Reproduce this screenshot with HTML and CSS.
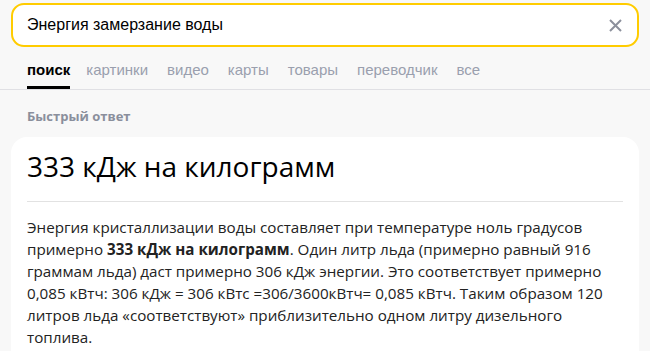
FILE: index.html
```html
<!DOCTYPE html>
<html lang="ru">
<head>
    <meta charset="UTF-8">
    <meta name="viewport" content="width=device-width, initial-scale=1.0">
    <title>Энергия замерзание воды</title>
    <link rel="stylesheet" href="styles.css">
</head>
<body>
    <!-- поисковая строка -->
    <div class="search-box">
        <span class="search-text">Энергия замерзание воды</span>
        <svg class="clear-icon" width="13" height="13" viewBox="0 0 13 13">
            <path d="M1 1 L12 12 M12 1 L1 12" stroke="#8c909c" stroke-width="2" fill="none"/>
        </svg>
    </div>

    <!-- вкладки -->
    <nav class="tabs">
        <a class="tab active">поиск</a>
        <a class="tab">картинки</a>
        <a class="tab">видео</a>
        <a class="tab">карты</a>
        <a class="tab">товары</a>
        <a class="tab">переводчик</a>
        <a class="tab">все</a>
    </nav>

    <main class="content">
        <div class="section-title">Быстрый ответ</div>
        <div class="answer-card">
            <h1 class="answer-title">333 кДж на килограмм</h1>
            <p class="answer-text">
                Энергия кристаллизации воды составляет при температуре ноль градусов
                примерно <b>333 кДж на килограмм</b>. Один литр льда (примерно равный 916
                граммам льда) даст примерно 306 кДж энергии. Это соответствует примерно
                0,085 кВтч: 306 кДж = 306 кВтс =306/3600кВтч= 0,085 кВтч. Таким образом 120
                литров льда «соответствуют» приблизительно одном литру дизельного
                топлива.
            </p>
        </div>
    </main>
</body>
</html>
```

FILE: styles.css
```css
body {
    margin: 0;
    padding: 0;
    background-color: #f8f8f8;
    font-family: "Liberation Sans", Arial, sans-serif;
    overflow: hidden;
}
.search-box {
    display: flex;
    align-items: center;
    justify-content: space-between;
    height: 40px;
    margin: 3px 11px 0 11px;
    padding: 0 15px 0 14px;
    background: #fff;
    border: 2px solid #fc0;
    border-radius: 13px;
}
.search-text {
    font-size: 16px;
    color: #000;
}
.clear-icon {
    display: block;
}
.tabs {
    display: flex;
    gap: 19px;
    height: 41px;
    margin-top: 2px;
    padding: 0 27px;
    border-bottom: 1px solid #e0e0e4;
    box-sizing: border-box;
}
.tab {
    display: flex;
    align-items: center;
    font-size: 15px;
    color: #9a9fae;
    border-bottom: 3px solid transparent;
    padding-top: 3px;
}
.tab.active {
    margin-right: -3px;
    color: #000;
    font-weight: bold;
    border-bottom-color: #000;
}
.content {
    padding: 0 11px;
}
.section-title {
    margin: 17px 0 0 16px;
    font-family: "Open Sans", sans-serif;
    font-size: 13px;
    font-weight: bold;
    color: #8a8f9c;
}
.answer-card {
    margin-top: 12px;
    padding: 10px 16px 20px;
    background: #fff;
    border-radius: 16px;
    font-family: "Open Sans", sans-serif;
}
.answer-title {
    margin: 0;
    padding-bottom: 16px;
    font-size: 28px;
    font-weight: 500;
    color: #000;
    border-bottom: 1px solid #e2e2e2;
}
.answer-text {
    margin: 14px 0 0;
    font-size: 15.2px;
    line-height: 22px;
    color: #222;
}
```
